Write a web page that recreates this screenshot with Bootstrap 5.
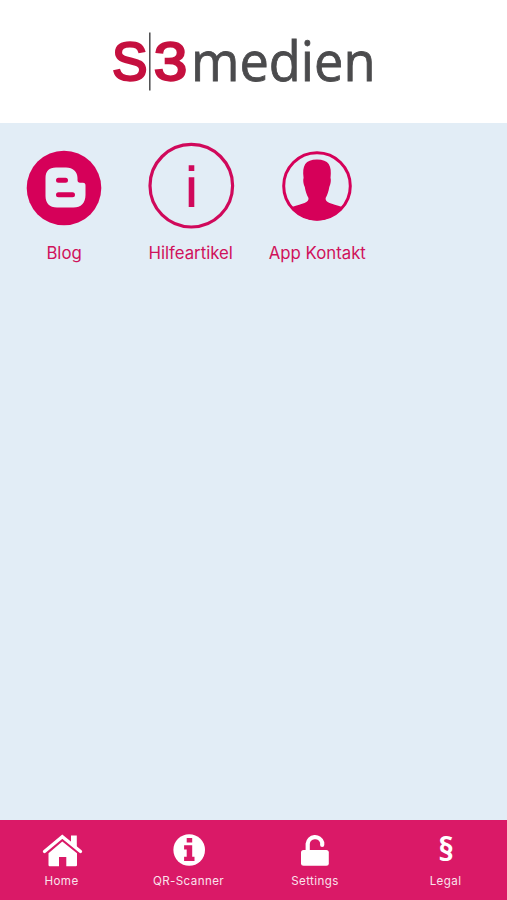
<!DOCTYPE html>
<html lang="de">
<head>
<meta charset="utf-8">
<meta name="viewport" content="width=device-width, initial-scale=1">
<title>S3 medien</title>
<link href="https://cdn.jsdelivr.net/npm/bootstrap@5.3.0/dist/css/bootstrap.min.css" rel="stylesheet">
<style>
body { font-family: Inter, "Liberation Sans", sans-serif; background: #e2edf6; }
.brand-bar { height: 123px; }
.tile-grid { display: grid; grid-template-columns: repeat(4, 126.6px); padding-left: .8px; }
.tile { color: #d0125b; font-size: 16.800px; line-height: 24px; }
.tile svg { width: 100px; height: 118px; }
.tab-bar { height: 80px; background: #da1967; display: grid; grid-template-columns: 123px 131px 122px 131px; }
.tab-item { color: #fff; font-size: 11.6px; line-height: 16px; letter-spacing: .4px; padding-top: 9px; }
.tab-item svg { width: 44px; height: 44px; overflow: visible; }
.tab-item span { opacity: .88; }
.tab-last { padding-left: 8px; }
.logo-bold { font: 400 54px "Liberation Sans", sans-serif; fill: #c5103f; stroke: #c5103f; stroke-width: 2.300px; }
.logo-light { font: 400 54px "Open Sans", sans-serif; fill: #4b4b4d; stroke: #4b4b4d; stroke-width: .8px; }
.section-sign { font: 700 32px "Open Sans", sans-serif; fill: #fff; }
</style>
</head>
<body>
<div class="d-flex flex-column vh-100 overflow-hidden">
  <header class="brand-bar bg-white flex-shrink-0">
    <svg class="d-block" width="507" height="123" role="img" aria-label="S3 medien">
      <text class="logo-bold" x="112" y="80.300" textLength="35.500" lengthAdjust="spacingAndGlyphs">S</text>
      <path d="M149.800 32.500V90.500" stroke="#4b4b4d" stroke-width="1.500"/>
      <text class="logo-bold" x="153.800" y="80.300" textLength="33.500" lengthAdjust="spacingAndGlyphs">3</text>
      <text class="logo-light" x="191" y="81" textLength="184.500" lengthAdjust="spacingAndGlyphs">medien</text>
    </svg>
  </header>
  <main class="tile-grid flex-grow-1 align-content-start">
    <a href="#" class="tile d-flex flex-column align-items-center text-decoration-none">
      <svg viewBox="14 123 100 118">
        <circle cx="64" cy="188" r="37.300" fill="#d60059"/>
        <path d="M56 167.500H66C73 167.500 77.500 172 77.500 178V180C77.500 182 78.500 182.700 80 182.700H83C84.800 182.700 85.500 183.500 85.500 185.500V195C85.500 203 81 207.500 73.500 207.500H57C49.500 207.500 45.500 203 45.500 196V178C45.500 171.500 49 167.500 56 167.500Z" fill="#e5eff7"/>
        <path d="M58.500 180.300H65.500M58.500 194.800H72.500" stroke="#d60059" stroke-width="5" stroke-linecap="round"/>
      </svg>
      <span>Blog</span>
    </a>
    <a href="#" class="tile d-flex flex-column align-items-center text-decoration-none">
      <svg viewBox="140.600 123 100 118">
        <circle cx="190.900" cy="185.700" r="41.300" fill="none" stroke="#d0095b" stroke-width="3.200"/>
        <path d="M188.300 165.300H193.900V170.900H188.300ZM188.300 177.300H193.900V207H188.300Z" fill="#d0095b"/>
      </svg>
      <span>Hilfeartikel</span>
    </a>
    <a href="#" class="tile d-flex flex-column align-items-center text-decoration-none">
      <svg viewBox="267.200 123 100 118">
        <circle cx="317.200" cy="186" r="33.300" fill="none" stroke="#d60059" stroke-width="3"/>
        <path d="M303.800 178C302.200 165.500 305.500 159.500 317.200 159.500S332.300 165.500 330.700 178C331.400 179.500 331 184 329.500 187C328.800 191.500 327.500 195 325.800 198C325.500 203.200 331 203 342.500 207C336 216 327 220.500 317.200 220.500S298.500 216 292 207C303.500 203 309 203.200 308.700 198C307 195 305.700 191.500 305 187C303.500 184 303.100 179.500 303.800 178Z" fill="#d60059"/>
      </svg>
      <span>App Kontakt</span>
    </a>
  </main>
  <nav class="tab-bar flex-shrink-0">
    <a href="#" class="tab-item d-flex flex-column align-items-center text-decoration-none">
      <svg viewBox="39.500 829 44 44">
        <path d="M44 851.500L61.800 836.700L80 851.500" fill="none" stroke="#fff" stroke-width="3.300" stroke-linecap="round" stroke-linejoin="miter"/>
        <path d="M70.500 835.500H76.300V848L70.500 843Z" fill="#fff"/>
        <path d="M61.800 841.500L76.500 853.300V865Q76.500 866.200 75.300 866.200H65.800V857H58.500V866.200H49.200Q48 866.200 48 865V853.300Z" fill="#fff"/>
      </svg>
      <span>Home</span>
    </a>
    <a href="#" class="tab-item d-flex flex-column align-items-center text-decoration-none">
      <svg viewBox="166.500 829 44 44">
        <circle cx="188.700" cy="850" r="15.800" fill="#fff"/>
        <path d="M186.200 838H191.700V842.500H186.200ZM183.600 845.200H191.700V856.800H194V861H183.600V856.800H186.200V849.400H183.600Z" fill="#da1967"/>
      </svg>
      <span>QR-Scanner</span>
    </a>
    <a href="#" class="tab-item d-flex flex-column align-items-center text-decoration-none">
      <svg viewBox="293 829 44 44">
        <path d="M307.700 852V843.800A7.400 7.400 0 0 1 322.200 842.500V845" fill="none" stroke="#fff" stroke-width="4.200" stroke-linecap="round"/>
        <rect x="301" y="850" width="27.800" height="15.800" rx="2.500" fill="#fff"/>
      </svg>
      <span>Settings</span>
    </a>
    <a href="#" class="tab-item tab-last d-flex flex-column align-items-center text-decoration-none">
      <svg viewBox="423.500 829 44 44">
        <text class="section-sign" x="445.800" y="860.500" text-anchor="middle">§</text>
      </svg>
      <span>Legal</span>
    </a>
  </nav>
</div>
<script src="https://cdn.jsdelivr.net/npm/bootstrap@5.3.0/dist/js/bootstrap.bundle.min.js"></script>
</body>
</html>
